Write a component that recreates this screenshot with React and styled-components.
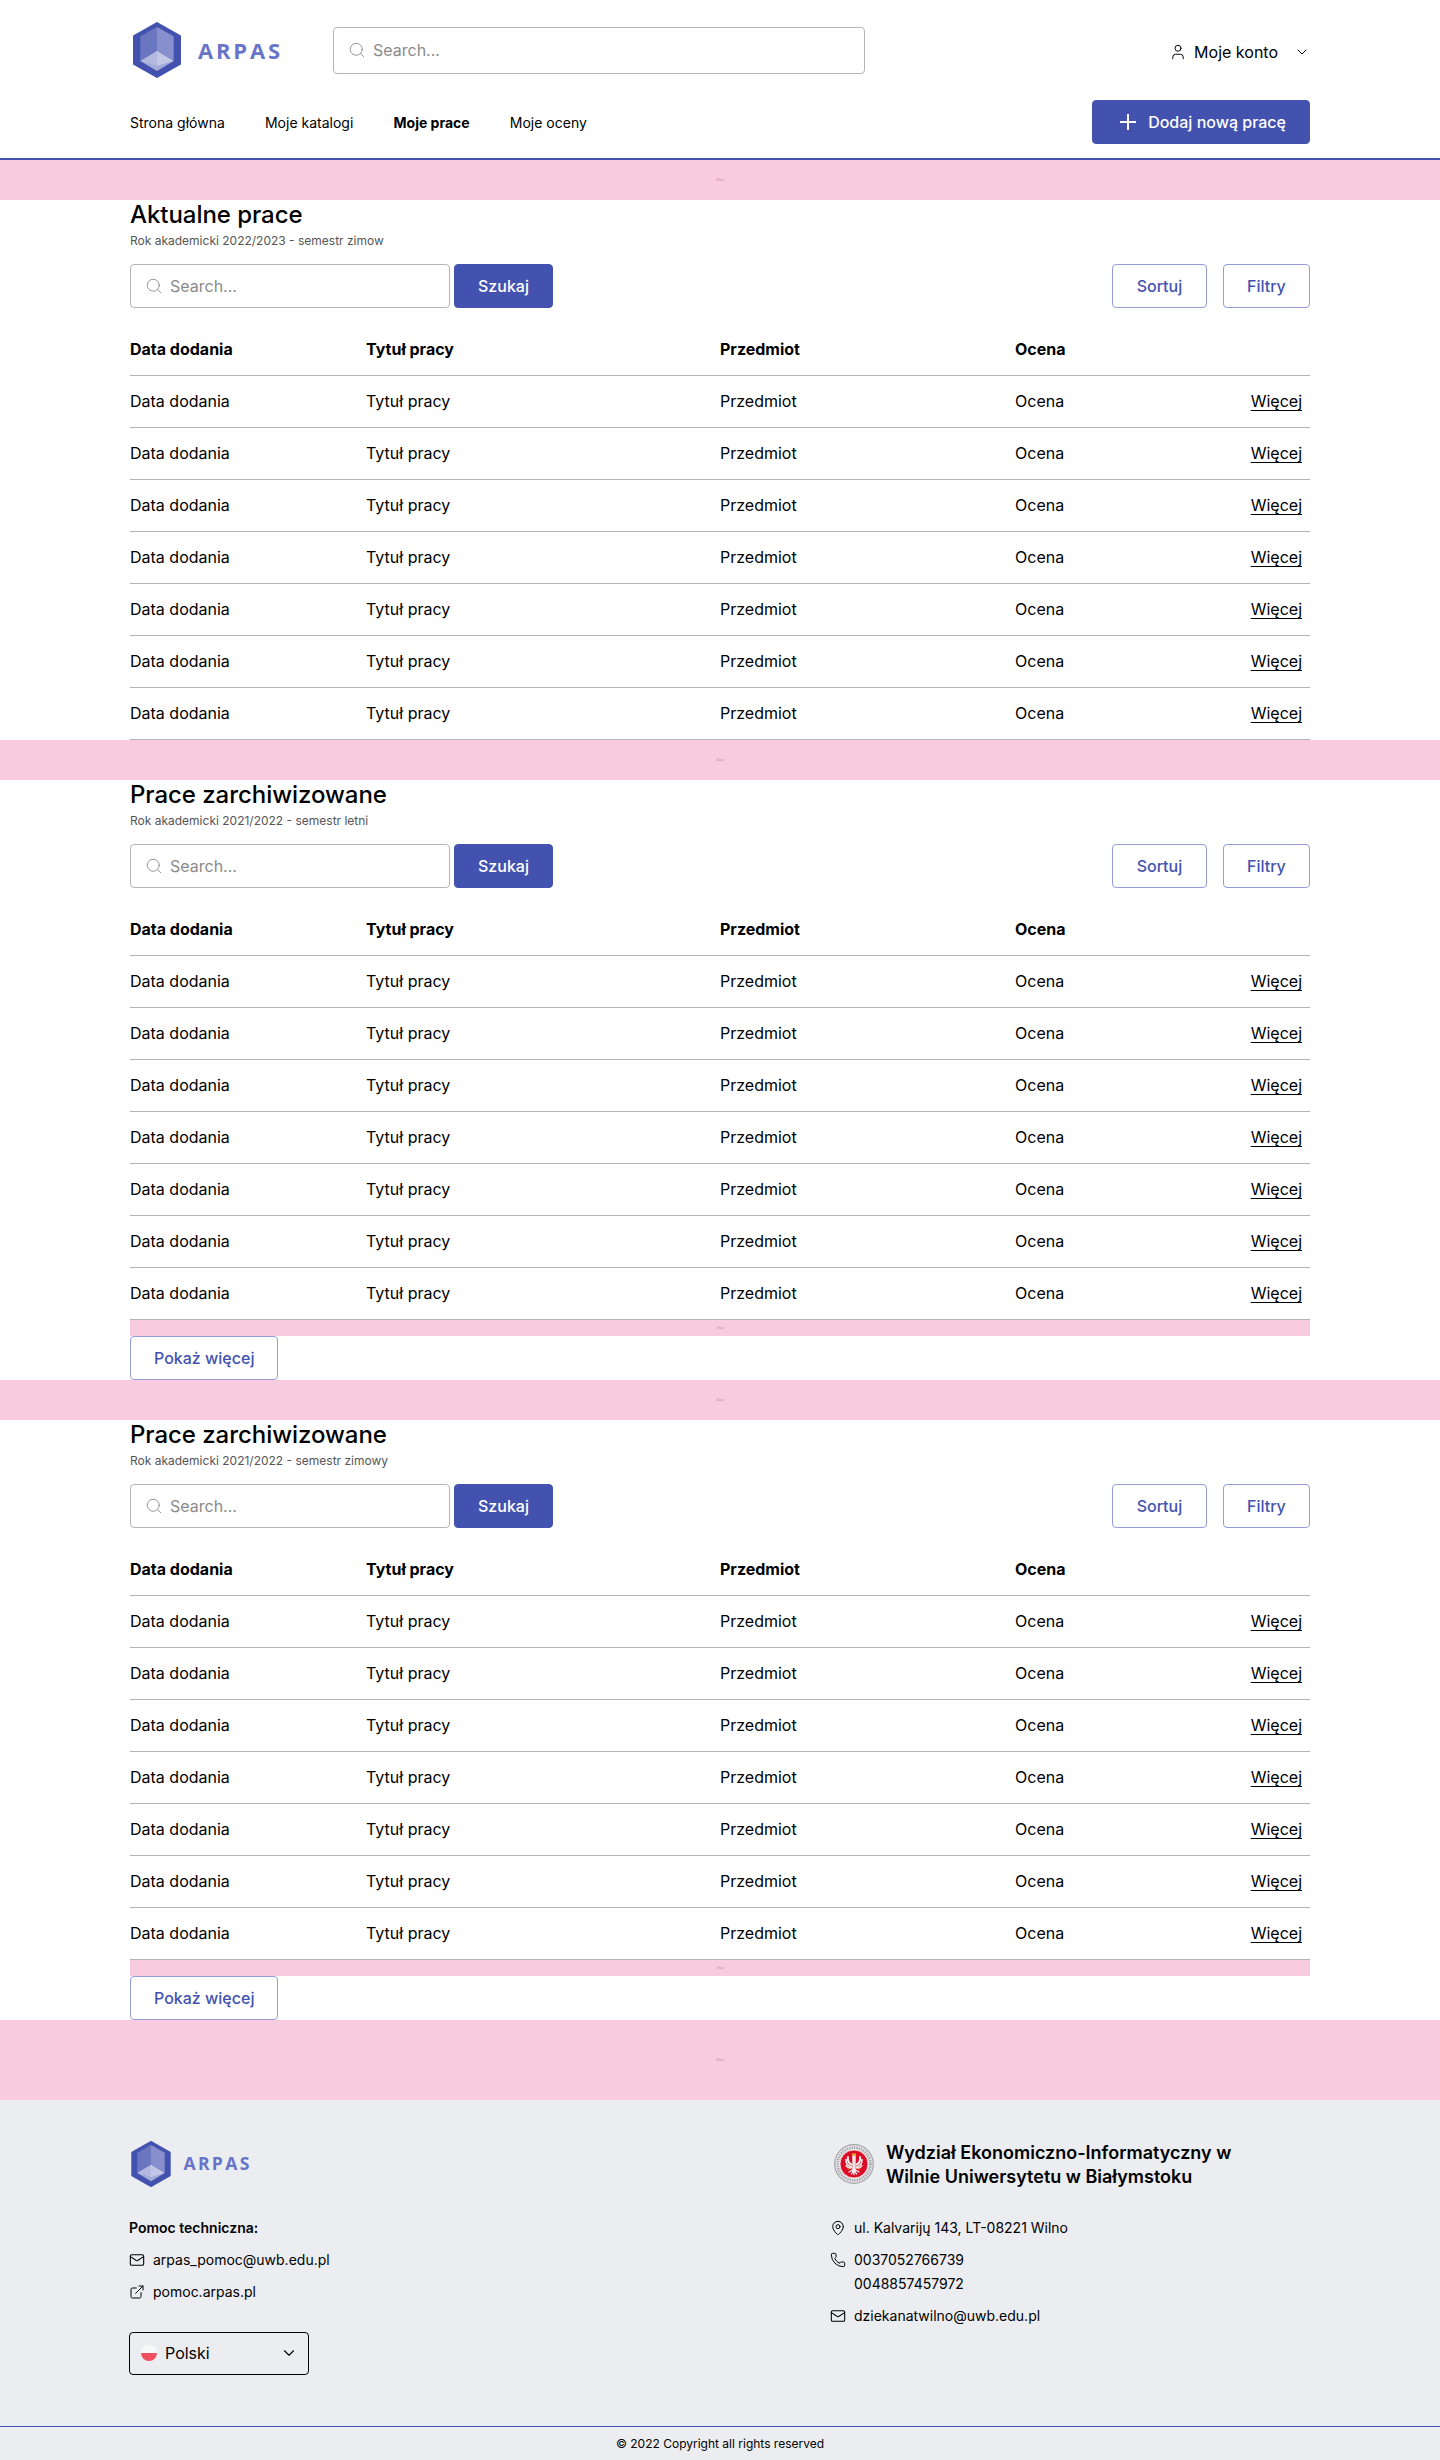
import React from "react";
import styled, { createGlobalStyle } from "styled-components";
import { User, ChevronDown, Search, Mail, ExternalLink, MapPin, Phone } from "lucide-react";

const BLUE = "#4352af";

const GlobalStyle = createGlobalStyle`
  *, *::before, *::after { box-sizing: border-box; }
  body {
    margin: 0;
    background: #fff;
    color: #000;
    font-family: Inter, "Liberation Sans", sans-serif;
    font-size: 16px;
    line-height: 24px;
  }
  a { color: inherit; text-decoration: none; }
  button { font: inherit; cursor: pointer; }
  svg { display: block; flex: none; }
`;

const Header = styled.header`
  height: 160px;
  padding: 20px 130px 0;
  border-bottom: 2px solid ${BLUE};
`;

const HeaderTop = styled.div`
  display: flex;
  align-items: center;
  height: 60px;
`;

const HeaderBottom = styled.div`
  display: flex;
  justify-content: space-between;
  align-items: center;
  height: 44px;
  margin-top: 20px;
`;

const Brand = styled.a`
  display: flex;
  align-items: center;
  width: ${(p) => (p.$small ? "auto" : "203px")};
  padding-left: ${(p) => (p.$small ? 2 : 3)}px;
  gap: ${(p) => (p.$small ? 12.5 : 17)}px;
`;

const BrandName = styled.span`
  font-family: "Open Sans", "Noto Sans", sans-serif;
  font-weight: 700;
  font-size: ${(p) => (p.$small ? 17.6 : 22)}px;
  line-height: 1;
  letter-spacing: ${(p) => (p.$small ? 2.3 : 2.8)}px;
  color: #6774c8;
`;

const SearchField = styled.label`
  display: flex;
  align-items: center;
  width: ${(p) => p.$width}px;
  height: ${(p) => p.$height}px;
  padding-left: 14px;
  gap: 7px;
  border: 1px solid #b5b5b5;
  border-radius: 4px;
  color: #8a8a8a;
`;

const SearchInput = styled.input`
  flex: 1;
  min-width: 0;
  padding: 0;
  border: 0;
  outline: 0;
  background: transparent;
  font: inherit;
  &::placeholder { color: #8a8a8a; opacity: 1; }
`;

const Account = styled.a`
  display: flex;
  align-items: center;
  margin: 4px 0 0 auto;
`;

const AccountName = styled.span`
  margin: 0 16px 0 7px;
`;

const Nav = styled.nav`
  display: flex;
  gap: 40.2px;
  padding-top: 1px;
  font-size: 14px;
`;

const NavLink = styled.a`
  font-weight: ${(p) => (p.$active ? 700 : 400)};
`;

const Button = styled.button`
  display: flex;
  align-items: center;
  gap: 8px;
  height: 44px;
  padding: 0 ${(p) => p.$pad ?? 23}px;
  border: 1px solid ${(p) => (p.$primary ? BLUE : "#949cdb")};
  border-radius: 4px;
  background: ${(p) => (p.$primary ? BLUE : "#fff")};
  color: ${(p) => (p.$primary ? "#fff" : BLUE)};
  font-weight: 500;
`;

const Spacer = styled.div`
  display: flex;
  align-items: center;
  justify-content: center;
  height: ${(p) => p.$size}px;
  background: #f8cbdf;
  color: rgba(110, 50, 80, 0.45);
  font-size: 3.5px;
  line-height: 4px;
`;

const Section = styled.section`
  padding: 0 130px;
`;

const Title = styled.h2`
  margin: 0;
  font-size: 24px;
  font-weight: 500;
  line-height: 29px;
  letter-spacing: -0.05px;
`;

const Subtitle = styled.p`
  margin: 2px 0 13px;
  color: #555;
  font-size: 12px;
  line-height: 20px;
`;

const Toolbar = styled.div`
  display: flex;
  gap: 4px;
  margin-bottom: 16px;
`;

const ToolbarActions = styled.div`
  display: flex;
  gap: 16px;
  margin-left: auto;
`;

const Row = styled.div`
  display: grid;
  grid-template-columns: 236px 354px 295px 1fr auto;
  align-items: center;
  height: 52px;
  padding: 0 8px 1px 0;
  border-bottom: 1px solid #b5b5b5;
  font-weight: ${(p) => (p.$head ? 700 : 400)};
`;

const MoreLink = styled.a`
  text-decoration: underline;
  text-decoration-thickness: 1px;
  text-underline-offset: 3px;
  text-decoration-skip-ink: none;
`;

const Footer = styled.footer`
  height: 360px;
  background: #ecedf1;
`;

const FooterColumns = styled.div`
  display: grid;
  grid-template-columns: 701px 1fr;
  height: 326px;
  padding: 40px 130px 0 129px;
`;

const FooterHead = styled.div`
  display: flex;
  align-items: center;
  gap: 12px;
  height: 48px;
  margin-bottom: 28px;
`;

const SealBox = styled.div`
  padding-left: 4px;
`;

const Faculty = styled.h3`
  margin: 0;
  padding-top: 2px;
  font-size: 18px;
  font-weight: 600;
  line-height: 24px;
`;

const ContactList = styled.div`
  display: flex;
  flex-direction: column;
  gap: 8px;
  font-size: 14px;
`;

const ContactTitle = styled.div`
  font-weight: 600;
`;

const Contact = styled.div`
  display: flex;
  gap: 8px;
  svg { margin-top: 4px; }
`;

const Language = styled.button`
  display: flex;
  align-items: center;
  width: 180px;
  height: 43px;
  margin-top: 28px;
  padding: 0 10px 1px 11px;
  gap: 8px;
  border: 1px solid #000;
  border-radius: 4px;
  background: transparent;
  color: #000;
  svg { margin-left: auto; }
`;

const Flag = styled.span`
  width: 16px;
  height: 16px;
  border-radius: 50%;
  background: linear-gradient(#f8f8f8 50%, #f04f5f 50%);
`;

const Copyright = styled.div`
  height: 34px;
  border-top: 1px solid ${BLUE};
  font-size: 12px;
  line-height: 34px;
  text-align: center;
`;

function Logo({ small }) {
  return (
    <Brand href="#" $small={small}>
      <svg width={small ? 40 : 48} height={small ? 46 : 56} viewBox="0 0 48 56">
        <path
          d="M24 1 47 14V42L24 55 1 42V14Z"
          fill={BLUE}
          stroke={BLUE}
          strokeWidth="2"
          strokeLinejoin="round"
        />
        <path d="M24 5 7.3 14.2V38.8L24 29Z" fill="#6b76c0" />
        <path d="M24 5 40.7 14.2V38.8L24 29Z" fill="#8790cd" />
        <path d="M24 29 7.3 39 24 49 40.7 39Z" fill="#a3abd9" />
        <path d="M24 29 7.3 39 24 43.8Z" fill="#b3b8df" />
        <path d="M24 29 40.7 39 24 43.8Z" fill="#c3c7e7" />
      </svg>
      <BrandName $small={small}>ARPAS</BrandName>
    </Brand>
  );
}

function Seal() {
  return (
    <svg width="40" height="40" viewBox="0 0 40 40">
      <circle cx="20" cy="20" r="19.3" fill="#e6e6e8" stroke="#a5a5a8" strokeWidth="1.2" />
      <circle cx="20" cy="20" r="16.4" fill="none" stroke="#9b9b9f" strokeWidth="2.6" strokeDasharray="1.1 1.3" />
      <circle cx="20" cy="20" r="14" fill="#dc0a24" stroke="#f2f2f2" strokeWidth="0.8" />
      <g fill="none" stroke="#f1eeee" strokeLinecap="round">
        <path d="M20 12v15" strokeWidth="3.4" />
        <path d="M17.500 20.500c-2.500-1-4-3.500-3.600-7.500M22.500 20.500c2.500-1 4-3.500 3.600-7.500" strokeWidth="2" />
        <path d="M17 22.500c-3-.5-5-3-5-7M23 22.500c3-.5 5-3 5-7" strokeWidth="1.600" />
        <path d="M18 23.500c-2.500 1-4.500.2-6-1.700M22 23.500c2.500 1 4.500.2 6-1.700" strokeWidth="1.400" />
        <path d="M18.500 26l-3.500 2M21.500 26l3.500 2M20 27v3.500M18.800 27.500l-1.300 2.500M21.200 27.500l1.300 2.500" strokeWidth="1.400" />
      </g>
      <path d="M18.300 11.200 18.600 9.500l1.400.8 1.400-.8.3 1.700zM13.600 25.200l2.600-.6M26.400 25.200l-2.600-.6" fill="#e7a72b" stroke="#e7a72b" strokeWidth="0.900" />
      <path d="M19 17v7M21 17v7" stroke="#cdb0b3" strokeWidth="0.500" />
    </svg>
  );
}

function SearchBox({ width, height }) {
  return (
    <SearchField $width={width} $height={height}>
      <Search size={18} strokeWidth={1.2} />
      <SearchInput placeholder="Search..." />
    </SearchField>
  );
}

function Gap({ size }) {
  return <Spacer $size={size}>{size}px</Spacer>;
}

function Works({ title, term, expandable }) {
  return (
    <Section>
      <Title>{title}</Title>
      <Subtitle>{term}</Subtitle>
      <Toolbar>
        <SearchBox width={320} height={44} />
        <Button $primary>Szukaj</Button>
        <ToolbarActions>
          <Button $pad={23.6}>Sortuj</Button>
          <Button $pad={23.2}>Filtry</Button>
        </ToolbarActions>
      </Toolbar>
      <Row $head>
        <span>Data dodania</span>
        <span>Tytuł pracy</span>
        <span>Przedmiot</span>
        <span>Ocena</span>
      </Row>
      {Array.from({ length: 7 }, (_, i) => (
        <Row key={i}>
          <span>Data dodania</span>
          <span>Tytuł pracy</span>
          <span>Przedmiot</span>
          <span>Ocena</span>
          <MoreLink href="#">Więcej</MoreLink>
        </Row>
      ))}
      {expandable && (
        <>
          <Gap size={16} />
          <Button>Pokaż więcej</Button>
        </>
      )}
    </Section>
  );
}

export default function App() {
  return (
    <>
      <GlobalStyle />
      <Header>
        <HeaderTop>
          <Logo />
          <SearchBox width={532} height={47} />
          <Account href="#">
            <User size={18} strokeWidth={1.3} />
            <AccountName>Moje konto</AccountName>
            <ChevronDown size={16} strokeWidth={1.5} />
          </Account>
        </HeaderTop>
        <HeaderBottom>
          <Nav>
            <NavLink href="#">Strona główna</NavLink>
            <NavLink href="#">Moje katalogi</NavLink>
            <NavLink href="#" $active>Moje prace</NavLink>
            <NavLink href="#">Moje oceny</NavLink>
          </Nav>
          <Button $primary>
            <svg width="24" height="24" viewBox="0 0 24 24" stroke="currentColor" strokeWidth="2">
              <path d="M12 4v16M4 12h16" />
            </svg>
            Dodaj nową pracę
          </Button>
        </HeaderBottom>
      </Header>
      <main>
        <Gap size={40} />
        <Works title="Aktualne prace" term="Rok akademicki 2022/2023 - semestr zimow" />
        <Gap size={40} />
        <Works title="Prace zarchiwizowane" term="Rok akademicki 2021/2022 - semestr letni" expandable />
        <Gap size={40} />
        <Works title="Prace zarchiwizowane" term="Rok akademicki 2021/2022 - semestr zimowy" expandable />
        <Gap size={80} />
      </main>
      <Footer>
        <FooterColumns>
          <div>
            <FooterHead>
              <Logo small />
            </FooterHead>
            <ContactList>
              <ContactTitle>Pomoc techniczna:</ContactTitle>
              <Contact>
                <Mail size={16} strokeWidth={1.6} />
                arpas_pomoc@uwb.edu.pl
              </Contact>
              <Contact>
                <ExternalLink size={16} strokeWidth={1.5} />
                pomoc.arpas.pl
              </Contact>
            </ContactList>
            <Language>
              <Flag />
              Polski
              <ChevronDown size={18} strokeWidth={1.5} />
            </Language>
          </div>
          <div>
            <FooterHead>
              <SealBox>
                <Seal />
              </SealBox>
              <Faculty>
                Wydział Ekonomiczno-Informatyczny w
                <br />
                Wilnie Uniwersytetu w Białymstoku
              </Faculty>
            </FooterHead>
            <ContactList>
              <Contact>
                <MapPin size={16} strokeWidth={1.5} />
                ul. Kalvarijų 143, LT-08221 Wilno
              </Contact>
              <Contact>
                <Phone size={16} strokeWidth={1.5} />
                <span>
                  0037052766739
                  <br />
                  0048857457972
                </span>
              </Contact>
              <Contact>
                <Mail size={16} strokeWidth={1.6} />
                dziekanatwilno@uwb.edu.pl
              </Contact>
            </ContactList>
          </div>
        </FooterColumns>
        <Copyright>© 2022 Copyright all rights reserved</Copyright>
      </Footer>
    </>
  );
}
